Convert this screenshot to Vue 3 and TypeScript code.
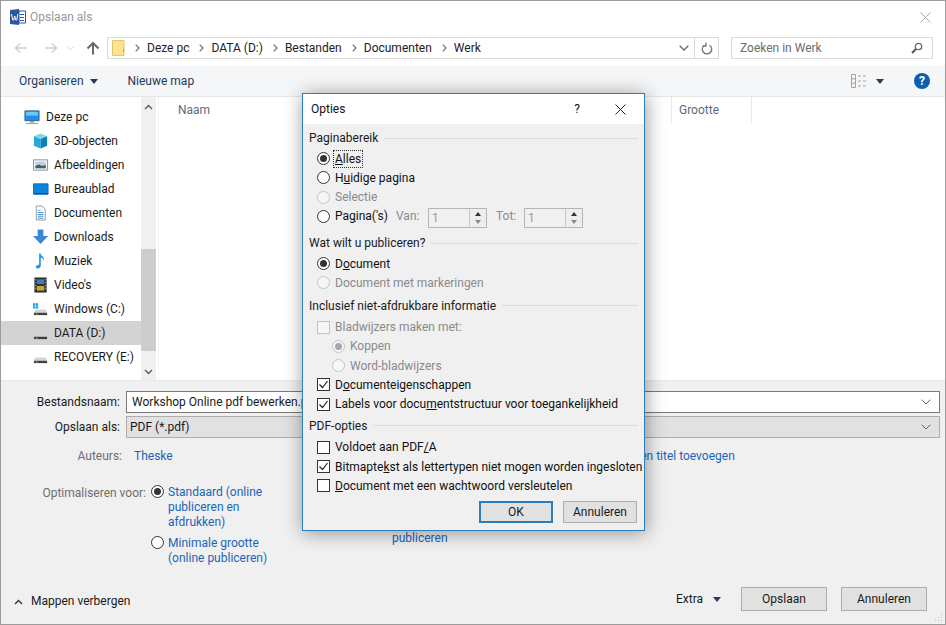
<script setup lang="ts">
interface P { d: string; fill?: string; stroke?: string }
const drive: P[] = [
  { d: 'M3 8.5h10l2 2.5v1H1v-1z', fill: '#d4d4d4' },
  { d: 'M1 12h14v2.5H1z', fill: '#3f3f3f' },
  { d: 'M3 13h2v1H3z', fill: '#9ad04f' },
]
const icons: Record<string, P[]> = {
  pc: [
    { d: 'M1 1.5h15v10.5H1z', fill: '#1f8fe6', stroke: '#2f5f88' },
    { d: 'M2 2.5h13v4H2z', fill: '#6fc6f6' },
    { d: 'M6.5 12.5h4v1.5h-4z', fill: '#7a8a99' },
    { d: 'M2 14.5h13v1H2z', fill: '#8a96a3' },
  ],
  cube: [
    { d: 'M8 0l7 3-7 3-7-3z', fill: '#7ad7ea' },
    { d: 'M1 3l7 3v10l-7-3z', fill: '#27a9d6' },
    { d: 'M15 3l-7 3v10l7-3z', fill: '#0d7fb5' },
  ],
  pic: [
    { d: 'M.5 2.5h15v11H.5z', fill: '#f4f4f4', stroke: '#8b8f94' },
    { d: 'M2.5 4.5h11v7h-11z', fill: '#b9d3e4' },
    { d: 'M2.5 11.5V9l4-1.5 3 1.5 4-1v3.5z', fill: '#4a5a64' },
  ],
  desk: [
    { d: 'M.5 2.5h15.5v11H.5z', fill: '#0a84e0', stroke: '#0a6cbd' },
    { d: 'M1 12.5h15v1H1z', fill: '#0d4f88' },
  ],
  doc: [
    { d: 'M3.5.5h6l3.5 3.5v11.5H3.5z', fill: '#fbfbfb', stroke: '#8f9aa5' },
    { d: 'M5 5h3v1H5zM5 7h6v1H5zM5 9h6v1H5zM5 11h6v1H5zM5 13h6v1H5z', fill: '#4a96d2' },
  ],
  down: [{ d: 'M5 0h6v7h5l-8 8.5L0 7h5z', fill: '#3a87d6' }],
  music: [{ d: 'M6.5 0h1.7c.2 3 4.3 3.6 3.3 8-.3-2-1.7-3.2-3.2-3.6V13c0 1.7-1.7 3-3.3 3-1.3 0-2-.7-2-1.6 0-1.5 1.7-2.7 3.5-2.5z', fill: '#1e96e8' }],
  video: [
    { d: 'M1.5 0h13v16h-13z', fill: '#2b2f33' },
    { d: 'M4 2h8v5H4z', fill: '#3b7fb5' },
    { d: 'M4 9h8v5H4z', fill: '#c9a53a' },
    { d: 'M2.5 2h.8v1h-.8zM2.5 5h.8v1h-.8zM2.5 8h.8v1h-.8zM2.5 11h.8v1h-.8zM12.7 2h.8v1h-.8zM12.7 5h.8v1h-.8zM12.7 8h.8v1h-.8zM12.7 11h.8v1h-.8z', fill: '#e8e8e8' },
  ],
  win: [
    { d: 'M0 2h2.5v2.5H0zM3 2h2.5v2.5H3zM0 5h2.5v2.5H0zM3 5h2.5v2.5H3z', fill: '#19a3e0' },
    ...drive,
  ],
  drive,
}
const places = [
  { label: 'Deze pc', icon: 'pc', top: true },
  { label: '3D-objecten', icon: 'cube' },
  { label: 'Afbeeldingen', icon: 'pic' },
  { label: 'Bureaublad', icon: 'desk' },
  { label: 'Documenten', icon: 'doc' },
  { label: 'Downloads', icon: 'down' },
  { label: 'Muziek', icon: 'music' },
  { label: "Video's", icon: 'video' },
  { label: 'Windows (C:)', icon: 'win' },
  { label: 'DATA (D:)', icon: 'drive', selected: true },
  { label: 'RECOVERY (E:)', icon: 'drive' },
]
const crumbs = ['Deze pc', 'DATA (D:)', 'Bestanden', 'Documenten', 'Werk']
interface Opt { kind: 'radio' | 'check'; a: string; k?: string; b?: string; on?: boolean; off?: boolean; sub?: boolean }
const bookmarks: Opt[] = [
  { kind: 'check', a: 'Bladwijzers maken met:', off: true },
  { kind: 'radio', a: 'Koppen', on: true, off: true, sub: true },
  { kind: 'radio', a: 'Word-bladwijzers', off: true, sub: true },
  { kind: 'check', a: 'D', k: 'o', b: 'cumenteigenschappen', on: true },
  { kind: 'check', a: 'Labels voor docu', k: 'm', b: 'entstructuur voor toegankelijkheid', on: true },
]
const publish: Opt[] = [
  { kind: 'radio', a: 'D', k: 'o', b: 'cument', on: true },
  { kind: 'radio', a: 'Document met markeringen', off: true },
]
const pdf: Opt[] = [
  { kind: 'check', a: 'Voldoet aan PDF', k: '/', b: 'A' },
  { kind: 'check', a: 'Bitmapte', k: 'k', b: 'st als lettertypen niet mogen worden ingesloten', on: true },
  { kind: 'check', a: '', k: 'D', b: 'ocument met een wachtwoord versleutelen' },
]
const sections = [
  { title: 'Wat wilt u publiceren?', opts: publish },
  { title: 'Inclusief niet-afdrukbare informatie', opts: bookmarks },
  { title: 'PDF-opties', opts: pdf },
]
</script>

<template>
  <div class="win">
    <header class="title">
      <svg class="word" width="17" height="16" viewBox="0 0 17 16">
        <path d="M1 1l9-1v16l-9-1z" fill="#2b579a" />
        <path d="M10 2h6.5v12H10z" fill="#fff" stroke="#2b579a" />
        <path d="M11 5h4v1h-4zM11 8h4v1h-4zM11 11h4v1h-4z" fill="#2b579a" />
        <path d="M2.5 5l1.2 6h1l1-4 1 4h1L8.900 5" fill="none" stroke="#fff" stroke-width="1" />
      </svg>
      <span class="title-text">Opslaan als</span>
      <svg class="close" width="11" height="11" viewBox="0 0 11 11"><path d="M.5.5l10 10M10.500.5l-10 10" stroke="#a8a8a8" fill="none" /></svg>
    </header>

    <div class="nav">
      <svg class="nav-arrow" width="14" height="12" viewBox="0 0 14 12"><path d="M13 6H1.500M6 1.500L1.500 6 6 10.500" fill="none" stroke="#d0d0d0" stroke-width="1.500" /></svg>
      <svg class="nav-arrow" width="14" height="12" viewBox="0 0 14 12"><path d="M1 6h11.500M8 1.500L12.500 6 8 10.500" fill="none" stroke="#d0d0d0" stroke-width="1.500" /></svg>
      <svg class="nav-drop" width="7" height="5" viewBox="0 0 7 5"><path d="M.5 1l3 3 3-3" fill="none" stroke="#d4d4d4" /></svg>
      <svg class="nav-up" width="14" height="14" viewBox="0 0 14 14"><path d="M7 13.500V2M1.500 7.500L7 2l5.500 5.500" fill="none" stroke="#6b6b6b" stroke-width="2" /></svg>
      <div class="addr">
        <svg width="13" height="16" viewBox="0 0 13 16"><path d="M.5.5h11.500v15H.5z" fill="#ffe48f" stroke="#e3c468" /><path d="M11 9h1v3h-1z" fill="#c9a23f" /></svg>
        <template v-for="c in crumbs" :key="c">
          <svg class="chev" width="5" height="8" viewBox="0 0 5 8"><path d="M.7.7L4 4 .7 7.300" fill="none" stroke="#6f6f6f" stroke-width="1.200" /></svg>
          <span class="crumb">{{ c }}</span>
        </template>
        <span class="grow"></span>
        <svg class="addr-drop" width="10" height="6" viewBox="0 0 10 6"><path d="M.7.7L5 5 9.300.7" fill="none" stroke="#6a6a6a" stroke-width="1.300" /></svg>
        <span class="addr-refresh">
          <svg width="12" height="13" viewBox="0 0 12 13"><path d="M3.500 3.200a4.700 4.700 0 1 0 5 0M5 .5v3.500H1.500" fill="none" stroke="#757575" stroke-width="1.300" /></svg>
        </span>
      </div>
      <div class="search">
        <span>Zoeken in Werk</span>
        <svg width="12" height="12" viewBox="0 0 12 12"><circle cx="7.500" cy="4.500" r="3.200" fill="none" stroke="#6b6b6b" stroke-width="1.300" /><path d="M5 7l-4 4" stroke="#555" stroke-width="2" /></svg>
      </div>
    </div>

    <div class="tools">
      <span class="tool">Organiseren</span>
      <i class="tri"></i>
      <span class="tool new">Nieuwe map</span>
      <span class="grow"></span>
      <svg width="16" height="14" viewBox="0 0 16 14"><path d="M.5.5h4v13h-4zM.5 4.800h4M.5 9.200h4" fill="none" stroke="#a2a2a2" /><path d="M7 2h3M12 2h3M7 7h3M12 7h3M7 12h3M12 12h3" stroke="#a2a2a2" /></svg>
      <i class="tri view"></i>
      <span class="help">?</span>
    </div>

    <div class="main">
      <nav class="side">
        <a v-for="p in places" :key="p.label" class="place" :class="{ top: p.top, sel: p.selected }">
          <svg width="16" height="16" viewBox="0 0 17 16"><path v-for="(s, i) in icons[p.icon]" :key="i" :d="s.d" :fill="s.fill" :stroke="s.stroke" /></svg>
          <span>{{ p.label }}</span>
        </a>
      </nav>
      <div class="scroll">
        <svg width="9" height="6" viewBox="0 0 9 6"><path d="M1 5l3.500-3.500L8 5" fill="none" stroke="#606060" stroke-width="1.500" /></svg>
        <div class="thumb"></div>
        <svg width="9" height="6" viewBox="0 0 9 6"><path d="M1 1l3.500 3.500L8 1" fill="none" stroke="#606060" stroke-width="1.500" /></svg>
      </div>
      <section class="list">
        <div class="col name">Naam</div>
        <div class="col size">Grootte</div>
      </section>
    </div>

    <div class="bottom">
      <div class="field">
        <label>Bestandsnaam:</label>
        <div class="input"><span>Workshop Online pdf bewerken.pdf</span>
          <svg width="10" height="6" viewBox="0 0 10 6"><path d="M.7.7L5 5 9.300.7" fill="none" stroke="#666" /></svg>
        </div>
      </div>
      <div class="field second">
        <label>Opslaan als:</label>
        <div class="input select"><span>PDF (*.pdf)</span>
          <svg width="10" height="6" viewBox="0 0 10 6"><path d="M.7.7L5 5 9.300.7" fill="none" stroke="#666" /></svg>
        </div>
      </div>
      <div class="meta">
        <span class="meta-label">Auteurs:</span>
        <span class="link author">Theske</span>
        <span class="link titel">Titel: een titel toevoegen</span>
      </div>
      <div class="opt">
        <span class="meta-label wide">Optimaliseren voor:</span>
        <div class="opt-col">
          <div class="opt-row">
            <span class="radio on dark"></span>
            <span class="link">Standaard (online<br />publiceren en<br />afdrukken)</span>
          </div>
          <div class="opt-row min">
            <span class="radio dark"></span>
            <span class="link">Minimale grootte<br />(online publiceren)</span>
          </div>
        </div>
        <span class="link after">Document openen na<br />publiceren</span>
      </div>
      <footer class="foot">
        <svg class="foot-chev" width="9" height="6" viewBox="0 0 9 6"><path d="M1 5l3.500-3.500L8 5" fill="none" stroke="#333" stroke-width="1.300" /></svg>
        <span class="hide">Mappen verbergen</span>
        <span class="grow"></span>
        <span class="extra">Extra</span>
        <i class="tri extra-tri"></i>
        <button class="btn">Opslaan</button>
        <button class="btn">Annuleren</button>
      </footer>
      <svg class="grip" width="9" height="9" viewBox="0 0 9 9"><path d="M7 1h1v1H7zM4 4h1v1H4zM7 4h1v1H7zM1 7h1v1H1zM4 7h1v1H4zM7 7h1v1H7z" fill="#bdbdbd" /></svg>
    </div>

    <div class="dlg">
      <div class="dlg-title">
        <span>Opties</span>
        <span class="grow"></span>
        <span class="q">?</span>
        <svg width="11" height="11" viewBox="0 0 11 11"><path d="M.5.5l10 10M10.500.5l-10 10" stroke="#222" fill="none" /></svg>
      </div>
      <div class="dlg-body">
        <div class="sec first">
          <h4><span>Paginabereik</span></h4>
          <div class="row"><span class="radio on"></span><span class="focus"><u>A</u>lles</span></div>
          <div class="row"><span class="radio"></span><span>H<u>u</u>idige pagina</span></div>
          <div class="row off"><span class="radio"></span><span>Selectie</span></div>
          <div class="row">
            <span class="radio"></span><span class="pag">Pa<u>g</u>ina('s)</span>
            <span class="spin-label van">Van:</span>
            <span class="spin"><span>1</span><span class="arrows"><i class="up"></i><i class="dn"></i></span></span>
            <span class="spin-label tot">Tot:</span>
            <span class="spin"><span>1</span><span class="arrows"><i class="up"></i><i class="dn"></i></span></span>
          </div>
        </div>
        <div v-for="s in sections" :key="s.title" class="sec">
          <h4><span>{{ s.title }}</span></h4>
          <div v-for="o in s.opts" :key="o.a + o.b" class="row" :class="{ off: o.off, sub: o.sub }">
            <span :class="[o.kind, { on: o.on }]">
              <svg v-if="o.kind === 'check' && o.on" width="11" height="11" viewBox="0 0 11 11"><path d="M1.500 5.500l3 3 5-6.500" fill="none" stroke="#222" stroke-width="1.200" /></svg>
            </span>
            <span>{{ o.a }}<u v-if="o.k">{{ o.k }}</u>{{ o.b }}</span>
          </div>
        </div>
        <div class="dlg-btns">
          <button class="btn ok">OK</button>
          <button class="btn">Annuleren</button>
        </div>
      </div>
    </div>
  </div>
</template>

<style scoped>
.win {
  width: 946px; height: 625px; box-sizing: border-box; border: 1px solid #9c9c9c;
  position: relative; display: flex; flex-direction: column; background: #fff; overflow: hidden;
  font: 12px/16px Roboto, "Open Sans", sans-serif; color: #1a1a1a;
}
.grow { flex: 1; }
.title { height: 32px; flex: none; display: flex; align-items: center; padding-left: 8px; }
.title-text { margin-left: 4px; color: #999; }
.close { margin-left: auto; margin-right: 14px; }
.nav { height: 22px; margin-top: 4px; margin-bottom: 7px; flex: none; display: flex; align-items: center; }
.nav-arrow { margin-left: 13px; }
.nav-arrow + .nav-arrow { margin-left: 16px; }
.nav-drop { margin-left: 9px; }
.nav-up { margin-left: 12px; }
.addr { margin-left: 7px; width: 612px; height: 22px; box-sizing: border-box; border: 1px solid #d9d9d9; display: flex; align-items: center; padding-left: 4px; }
.chev { margin-left: 10px; margin-right: 7px; }
.crumb { color: #222; }
.addr-drop { margin-right: 5px; }
.addr-refresh { height: 20px; border-left: 1px solid #d9d9d9; width: 23px; display: flex; align-items: center; justify-content: center; }
.search { margin-left: 12px; width: 202px; height: 22px; box-sizing: border-box; border: 1px solid #d9d9d9; display: flex; align-items: center; justify-content: space-between; padding: 0 9px 0 8px; color: #6d6d6d; }
.tools { height: 30px; flex: none; background: #f5f6f7; border-bottom: 1px solid #e6e6e6; display: flex; align-items: center; padding-left: 18px; color: #1f3a5c; }
.tri { width: 0; height: 0; border: 4.5px solid transparent; border-top: 5px solid #2b3b55; border-bottom: 0; display: block; }
.tools .tri { margin-left: 6px; }
.tool.new { margin-left: 30px; }
.tools .tri.view { margin-left: 9px; margin-right: 30px; }
.help { width: 16px; height: 16px; border-radius: 50%; background: #0a5fb0; color: #fff; font-weight: 700; font-size: 12px; line-height: 16px; text-align: center; margin-right: 15px; }
.main { height: 283px; flex: none; display: flex; }
.side { width: 140px; flex: none; padding-top: 8px; box-sizing: border-box; }
.place { height: 24px; display: flex; align-items: center; gap: 5px; padding-left: 32px; color: #1a1a1a; }
.place.top { padding-left: 23px; gap: 6px; }
.place.sel { background: #d3d3d3; }
.scroll { width: 15px; flex: none; background: #f0f0f0; display: flex; flex-direction: column; align-items: center; padding-top: 7px; box-sizing: border-box; }
.thumb { width: 15px; height: 102px; margin-top: 139px; margin-bottom: 18px; background: #cdcdcd; flex: none; }
.list { flex: 1; margin-left: 2px; border-left: 1px solid #f2f2f2; display: flex; align-items: flex-start; color: #5c6b7c; }
.col { height: 26px; display: flex; align-items: center; box-sizing: border-box; }
.col.name { width: 513px; padding-left: 19px; border-right: 1px solid #e8e8e8; }
.col.size { width: 80px; padding-left: 7px; border-right: 1px solid #e8e8e8; }
.bottom { flex: 1; background: #f0f0f0; border-top: 1px solid #eaeaea; position: relative; display: flex; flex-direction: column; padding-top: 10px; }
.field { display: flex; align-items: center; height: 22px; }
.field.second { margin-top: 3px; }
.field label { width: 119px; text-align: right; color: #1a1a1a; }
.input { margin-left: 6px; width: 814px; height: 22px; box-sizing: border-box; border: 1px solid #7a7a7a; background: #fff; display: flex; align-items: center; justify-content: space-between; padding: 0 8px 0 5px; }
.input.select { background: #e1e1e1; border-color: #adadad; padding-left: 3px; }
.meta { display: flex; margin-top: 10px; height: 16px; }
.meta-label { width: 121px; text-align: right; color: #6d6d6d; flex: none; }
.meta-label.wide { width: 145px; }
.link { color: #1b65b8; }
.author { margin-left: 12px; }
.titel { margin-left: 432px; white-space: nowrap; }
.opt { display: flex; margin-top: 21px; position: relative; height: 100px; }
.opt-col { margin-left: 5px; width: 241px; }
.opt-row { display: flex; gap: 4px; line-height: 15px; }
.opt-row.min { margin-top: 6px; }
.after { margin-top: 31px; line-height: 15px; white-space: nowrap; }
.foot { margin-top: auto; height: 24px; margin-bottom: 13px; display: flex; align-items: center; padding-left: 13px; }
.foot-chev { margin-top: 5px; }
.hide { margin-left: 8px; margin-top: 4px; }
.extra { margin-right: 10px; }
.extra-tri { margin-right: 20px; }
.btn { width: 86px; height: 24px; box-sizing: border-box; border: 1px solid #adadad; background: #e1e1e1; font: inherit; color: #1a1a1a; padding: 0; }
.foot .btn + .btn { margin-left: 14px; margin-right: 18px; }
.grip { position: absolute; right: 2px; bottom: 2px; }
.dlg { position: absolute; left: 301px; top: 92px; width: 343px; height: 438px; box-sizing: border-box; border: 1px solid #2b7fc0; background: #f0f0f0; box-shadow: 1px 2px 18px rgba(0, 0, 0, .4); display: flex; flex-direction: column; }
.dlg-title { height: 30px; flex: none; background: #fff; display: flex; align-items: center; padding: 0 18px 0 8px; color: #111; }
.q { margin-right: 35px; }
.dlg-body { flex: 1; padding: 5px 6px 0 6px; position: relative; }
.sec { margin-top: 3px; }
.sec.first { margin-top: 0; }
.sec.first + .sec { margin-top: 7px; }
.sec:nth-child(4) { margin-top: 2px; }
h4 { margin: 0 0 2px; font: inherit; height: 20px; display: flex; align-items: center; gap: 6px; }
.sec.first h4 { margin-bottom: 0; box-sizing: border-box; padding-bottom: 2px; }
.sec.first + .sec h4 { margin-bottom: 1px; }
h4::after { content: ""; flex: 1; height: 1px; background: #dcdcdc; }
.row { height: 19.25px; display: flex; align-items: center; gap: 5px; padding-left: 8px; color: #111; white-space: nowrap; }
.row.sub { padding-left: 23px; }
.row.off { color: #8a8a8a; }
.radio { width: 13px; height: 13px; flex: none; box-sizing: border-box; border: 1px solid #333; border-radius: 50%; background: #fff; position: relative; display: block; }
.radio.on::after { content: ""; position: absolute; inset: 2px; border-radius: 50%; background: #333; }
.row.off .radio { border-color: #c4c4c4; background: #f6f6f6; }
.row.off .radio.on::after { background: #a8a8a8; }
.check { width: 13px; height: 13px; flex: none; box-sizing: border-box; border: 1px solid #333; background: #fff; display: block; }
.check svg { display: block; }
.row.off .check { border-color: #c4c4c4; background: #f6f6f6; }
.focus { outline: 1px dotted #333; padding: 0 1px; margin-left: -1px; }
.pag { width: 50px; flex: none; }
.spin-label { color: #8a8a8a; flex: none; }
.spin-label.van { width: 27px; margin-left: 6px; }
.spin-label.tot { width: 23px; margin-left: 4px; }
.spin { width: 59px; height: 20px; flex: none; box-sizing: border-box; border: 1px solid #b5b5b5; display: flex; align-items: center; justify-content: space-between; padding-left: 3px; color: #9a9a9a; margin-top: 3px; }
.arrows { width: 16px; height: 18px; border-left: 1px solid #c8c8c8; background: #eee; display: flex; flex-direction: column; align-items: center; justify-content: space-evenly; }
.arrows i { width: 0; height: 0; border: 3.5px solid transparent; display: block; }
.arrows .up { border-bottom: 4px solid #333; border-top: 0; }
.arrows .dn { border-top: 4px solid #888; border-bottom: 0; }
.dlg-btns { position: absolute; right: 7px; top: 377px; display: flex; gap: 10px; }
.dlg-btns .btn { width: 74px; height: 22px; }
.dlg-btns .ok { border: 2px solid #2b7cb8; }
</style>

<style>
html, body { margin: 0; overflow: hidden; background: #fff; }
</style>
